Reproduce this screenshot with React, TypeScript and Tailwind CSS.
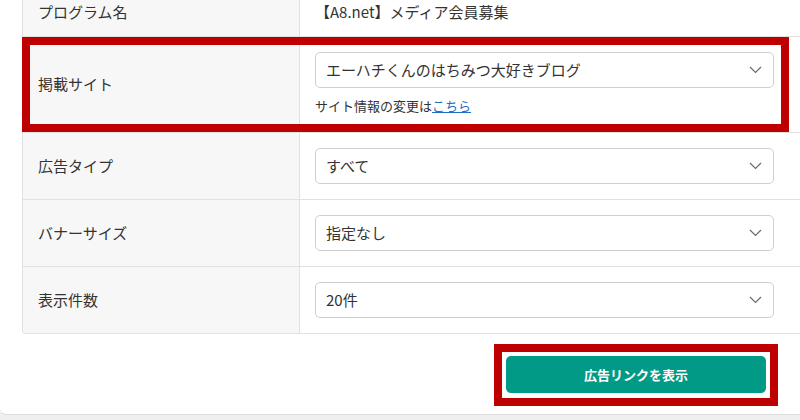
import React from 'react'

const FONT = '[font-family:"Noto_Sans_CJK_JP","Noto_Sans",sans-serif]'

function Chevron() {
  return (
    <svg width="13" height="8" viewBox="0 0 13 8" fill="none" className="shrink-0">
      <path d="M1 1l5.5 5.5L12 1" stroke="#6b6b6b" strokeWidth="1.2" />
    </svg>
  )
}

function SelectBox({ value }: { value: string }) {
  return (
    <div className="flex h-[36px] w-[459px] items-center justify-between rounded-[5px] border border-[#cfcfcf] bg-white pl-[10px] pr-[11px]">
      <span className="text-[15px] leading-[22px] text-[#333]">{value}</span>
      <Chevron />
    </div>
  )
}

function Row({
  label,
  children,
  highlighted = false,
  last = false,
}: {
  label: string
  children: React.ReactNode
  highlighted?: boolean
  last?: boolean
}) {
  return (
    <div
      className={[
        'relative flex',
        last ? '' : 'border-b border-[#e1e1e1]',
      ].join(' ')}
    >
      <div
        className={[
          'flex w-[277px] shrink-0 items-center border-r border-[#e1e1e1] bg-[#f7f7f7] pl-[15px] text-[15px] text-[#333]',
          last ? 'rounded-bl-[4px]' : '',
        ].join(' ')}
      >
        {label}
      </div>
      <div
        className={[
          'flex flex-col justify-center pl-[15px] pt-[15px]',
          highlighted ? 'pb-[17px]' : 'pb-[15px]',
        ].join(' ')}
      >
        {children}
      </div>
      {highlighted && (
        <div className="pointer-events-none absolute left-[-1px] top-[0px] h-[95px] w-[767px] border-[8px] border-[#bf0000]" />
      )}
    </div>
  )
}

export default function App() {
  return (
    <div className={`h-[420px] w-[800px] overflow-hidden bg-[#efefef] ${FONT}`}>
      <div className="mt-[-14px] w-[800px] rounded-bl-[6px] border-b border-[#dedede] bg-white pb-[8px]">
        <div className="ml-[22px] w-[800px] rounded-bl-[4px] border-b border-l border-[#e1e1e1]">
          <div className="flex border-b border-[#e1e1e1]">
            <div className="w-[277px] shrink-0 border-r border-[#e1e1e1] bg-[#f7f7f7] pl-[15px] pt-[15px] pb-[13px] text-[15px] leading-[22px] text-[#333]">
              プログラム名
            </div>
            <div className="pl-[15px] pt-[15px] pb-[13px] text-[15px] leading-[22px] text-[#333]">
              【A8.net】メディア会員募集
            </div>
          </div>

          <Row label="掲載サイト" highlighted>
            <SelectBox value="エーハチくんのはちみつ大好きブログ" />
            <div className="mt-[9px] text-[13px] leading-[18px] text-[#333]">
              サイト情報の変更は
              <span className="text-[#1f6fc4] underline">こちら</span>
            </div>
          </Row>
          <Row label="広告タイプ">
            <SelectBox value="すべて" />
          </Row>
          <Row label="バナーサイズ">
            <SelectBox value="指定なし" />
          </Row>
          <Row label="表示件数" last>
            <SelectBox value="20件" />
          </Row>
        </div>

        <div className="mt-[10px] flex justify-end pr-[22px]">
          <div className="border-[8px] border-[#bf0000] bg-white px-[4px] pt-[4px] pb-[5px]">
            <button
              type="button"
              className="flex h-[37px] w-[260px] items-center justify-center rounded-[5px] bg-[#009a86] text-[13px] font-bold text-white"
            >
              広告リンクを表示
            </button>
          </div>
        </div>
      </div>
    </div>
  )
}
